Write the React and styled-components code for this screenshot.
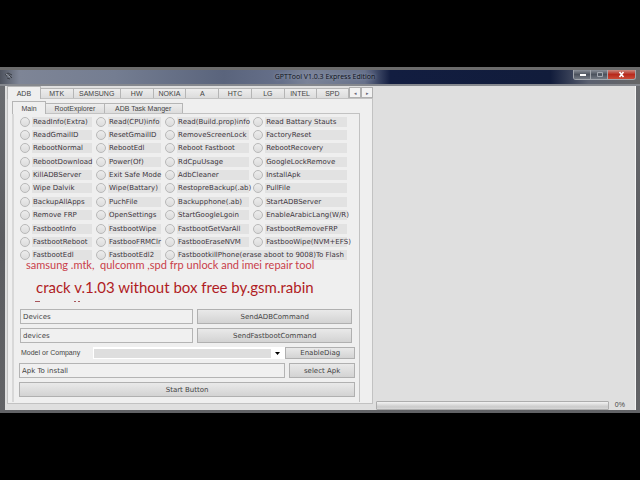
import React, { useState } from 'react';
import styled, { createGlobalStyle } from 'styled-components';

const GlobalStyle = createGlobalStyle`
    * {
        box-sizing: border-box;
    }

    body {
        margin: 0;
        background-color: #000;
        font-family: "DejaVu Sans", sans-serif;
        font-size: 7px;
        line-height: 10px;
        color: #444;
    }

    button, input, select {
        font: inherit;
        color: inherit;
        margin: 0;
        border-radius: 0;
    }
`

const Page = styled.div`
    min-height: 100vh;
    display: flex;
    align-items: center;
`

const Window = styled.div`
    flex: 1;
    min-width: 0;
    padding: 0 4px 3px 5px;
    background: linear-gradient(#6c6e72, #5b5c60 50%, #626366);
`

const TitleBar = styled.header`
    height: 19px;
    margin: 0 -4px 0 -5px;
    padding: 2px 4px 0 5px;
    display: grid;
    grid-template-columns: 72px 1fr 63px;
    align-items: start;
    border-top: 3px solid #6b6b6b;
    border-bottom: 2px solid #85888e;
    background: linear-gradient(90deg, #4e535e, #7e8596 3%, #747d91 18%, #5a647c 35%, #66708a 44%, #7b8498 48%, #67718a 57%, #121d40 61%, #111c3b 86%, #5a6070 92%, #666 100%);

    h1 {
        margin: 0;
        font-family: "Open Sans", sans-serif;
        font-size: 7px;
        font-weight: 400;
        line-height: 10px;
        text-align: center;
        color: #0c1018;
        text-shadow: 0 0 3px #8d97ad, 0 0 5px #8d97ad;
    }
`

const WindowButtons = styled.div`
    display: flex;
    margin-top: -2px;
    border: 1px solid #a2a6ad;
    border-top: none;
    border-radius: 0 0 3px 3px;
    overflow: hidden;
`

const WindowButton = styled.button`
    flex: ${({ $close }) => $close ? 28 : 17};
    height: 9px;
    padding: 0;
    display: flex;
    align-items: center;
    justify-content: center;
    border: none;
    border-right: 1px solid #a2a6ad;
    background: ${({ $close }) => $close ? 'linear-gradient(#c98a80, #b8291c 50%, #c84b38)' : 'linear-gradient(#8b9099, #4c525d 50%, #747a84)'};

    &:last-child {
        border-right: none;
    }

    svg {
        display: block;
    }
`

const Client = styled.main`
    display: grid;
    grid-template-columns: 368fr 263fr;
    height: 324px;
    padding-left: 2px;
    background-color: #dfdfdf;
    border-right: 1px solid #f4f4f4;
`

const LeftSide = styled.div`
    min-width: 0;
    display: flex;
    flex-direction: column;
    margin-bottom: 6px;
`

const Tabs = styled.nav`
    display: flex;
    align-items: flex-end;
    height: 12px;
    font-family: "Liberation Sans", sans-serif;
`

const Tab = styled.button`
    flex: ${({ $w }) => $w};
    min-width: 0;
    height: ${({ $active }) => $active ? 13 : 10}px;
    margin-bottom: ${({ $active }) => $active ? -1 : 0}px;
    position: relative;
    z-index: ${({ $active }) => $active ? 1 : 0};
    padding: 0;
    line-height: 9px;
    white-space: nowrap;
    border: 1px solid #b5b5b5;
    border-left-width: ${({ $active }) => $active ? 1 : 0}px;
    border-bottom: none;
    background: ${({ $active }) => $active ? '#efefef' : 'linear-gradient(#ededed, #dcdcdc)'};
`

const ArrowButton = styled.button`
    width: 12px;
    height: 11px;
    padding: 0;
    font-size: 5px;
    line-height: 6px;
    color: #667;
    border: 1px solid #b0b0b0;
    background-color: #f2f2f2;
`

const TabPanel = styled.section`
    flex: 1;
    display: flex;
    flex-direction: column;
    padding: 2px 12px 1px 4px;
    border: 1px solid #c2c2c2;
    background-color: #efefef;
`

const InnerTabs = styled(Tabs)`
    width: 49%;
`

const MainPanel = styled.div`
    flex: 1;
    padding: 1px 4px 0 5px;
    border: 1px solid #c2c2c2;
    border-bottom: none;
    border-left: 2px solid #d8d8d8;
`

const Options = styled.div`
    height: 147px;
    padding-left: 1px;
    display: grid;
    grid-template-columns: 76fr 69fr 88fr 102fr;
    grid-auto-rows: 1fr;
    align-items: center;
`

const Option = styled.label`
    min-width: 0;
    display: flex;
    align-items: center;
    gap: 2px;
    padding-right: ${({ $last }) => $last ? 8 : 4}px;
    grid-column: ${({ $wide }) => $wide ? 'span 2' : 'auto'};

    input {
        appearance: none;
        flex: none;
        width: 10px;
        height: 10px;
        border: 1px solid #b8b8b8;
        border-radius: 50%;
        background: linear-gradient(#ececec, #dcdcdc);
    }

    input:checked {
        background: radial-gradient(#555 30%, #e4e4e4 40%);
    }

    span {
        flex: 1;
        min-width: 0;
        height: 10px;
        padding-left: 1px;
        white-space: nowrap;
        color: #3c353c;
        background-color: #e2e2e2;
    }
`

const Notice = styled.div`
    height: 43px;
    margin-bottom: 7px;
    margin-top: -3px;
    overflow: hidden;
    font-family: Lato, sans-serif;
    white-space: nowrap;
    position: relative;

    p {
        margin: 0;
    }
`

const NoticeLine = styled.p`
    padding-left: ${({ $big }) => $big ? 17 : 7}px;
    font-size: ${({ $big }) => $big ? 15 : 11}px;
    line-height: ${({ $big }) => $big ? 34 : 11}px;
    color: ${({ $big }) => $big ? '#b01c24' : '#c9404a'};
`

// Tops of the next line, cut off by the end of the notice
const CutLine = styled.div`
    position: absolute;
    left: 16px;
    bottom: 0;
    width: 45px;
    height: 1px;
    background: linear-gradient(90deg, #a8545a 0 5px, transparent 5px 39px, #a8545a 39px 41px, transparent 41px 43px, #a8545a 43px);
`

const Controls = styled.div`
    display: flex;
    flex-direction: column;
    gap: 4px;
`

const ControlRow = styled.div`
    display: grid;
    grid-template-columns: ${({ $columns }) => $columns};
    gap: 4px;
    align-items: center;
    padding: ${({ $inset }) => $inset ? '0 3px 0 1px' : 0};
`

const TextBox = styled.input`
    width: 100%;
    min-width: 0;
    height: 15px;
    padding: 0 2px;
    border: 1px solid #b4b4b4;
    background-color: #f0f0f0;
`

const Button = styled.button`
    min-width: 0;
    height: ${({ $small }) => $small ? 12 : 15}px;
    padding: 0;
    line-height: 10px;
    white-space: nowrap;
    border: 1px solid #b0b0b0;
    background: linear-gradient(#e9e9e9, #d3d3d3);
`

const ModelRow = styled.div`
    display: grid;
    grid-template-columns: 74fr 192fr 70fr;
    align-items: center;

    label {
        padding-left: 2px;
        font-family: "Liberation Sans", sans-serif;
        white-space: nowrap;
    }
`

const SelectBox = styled.div`
    display: flex;
    align-items: center;
    height: 12px;
    padding-right: 4px;
    border: 1px solid #fff;
    background-color: #fff;

    select {
        appearance: none;
        flex: 1;
        min-width: 0;
        height: 9px;
        padding: 0;
        margin-right: 4px;
        border: none;
        background-color: #dedede;
    }
`

const RightSide = styled.div`
    display: flex;
    align-items: flex-end;
    gap: 6px;
    padding: 0 10px 0 3px;
    font-family: "Liberation Sans", sans-serif;
`

const Progress = styled.div`
    flex: 1;
    height: 9px;
    border: 1px solid #adadad;
    border-radius: 1px;
    background: linear-gradient(#f2f2f2, #cacaca 70%, #d8d8d8);
`

const ProgressFill = styled.div`
    height: 100%;
    background-color: #6cb86c;
`

const tabs = [
    ['ADB', 33], ['MTK', 33], ['SAMSUNG', 48], ['HW', 33], ['NOKIA', 33],
    ['A', 33], ['HTC', 33], ['LG', 33], ['INTEL', 32], ['SPD', 33],
];

const innerTabs = [['Main', 33], ['RootExplorer', 59], ['ADB Task Manger', 79]];

const options = [
    'ReadInfo(Extra)', 'Read(CPU)info', 'Read(Build.prop)info', 'Read Battary Stauts',
    'ReadGmailID', 'ResetGmailID', 'RemoveScreenLock', 'FactoryReset',
    'RebootNormal', 'RebootEdl', 'Reboot Fastboot', 'RebootRecovery',
    'RebootDownload', 'Power(Of)', 'RdCpuUsage', 'GoogleLockRemove',
    'KillADBServer', 'Exit Safe Mode', 'AdbCleaner', 'InstallApk',
    'Wipe Dalvik', 'Wipe(Battary)', 'RestopreBackup(.ab)', 'PullFile',
    'BackupAllApps', 'PuchFile', 'Backupphone(.ab)', 'StartADBServer',
    'Remove FRP', 'OpenSettings', 'StartGoogleLgoin', 'EnableArabicLang(W/R)',
    'FastbootInfo', 'FastbootWipe', 'FastbootGetVarAll', 'FastbootRemoveFRP',
    'FastbootReboot', 'FastbooFRMClr', 'FastbooEraseNVM', 'FastbooWipe(NVM+EFS)',
    'FastbootEdl', 'FastbootEdl2', 'FastbootkillPhone(erase aboot to 9008)To Flash',
];

export default function App() {

    const [tab, setTab] = useState('ADB');
    const [innerTab, setInnerTab] = useState('Main');
    const progress = 0;

    // Small Components

    const titleBar = (
        <TitleBar>
            <svg width="8" height="8" viewBox="0 0 8 8" fill="none" stroke="#3c4047">
                <path d="M0 3L3 1L7 3M1 4L4 3L7 6M2 6L5 7" />
                <path d="M1 2L5 5" stroke="#a0a5ad" />
            </svg>
            <h1>GPTTool V1.0.3 Express Edition</h1>
            <WindowButtons>
                <WindowButton aria-label="Minimize">
                    <svg width="7" height="7"><path d="M1 3h6v2h-6z" fill="#fff" /></svg>
                </WindowButton>
                <WindowButton aria-label="Maximize">
                    <svg width="7" height="7"><path d="M1.5 1.5h5v4h-5z" fill="none" stroke="#a4a8b0" /></svg>
                </WindowButton>
                <WindowButton $close aria-label="Close">
                    <svg width="7" height="7"><path d="M1.5 1L5.5 6M5.5 1L1.5 6" fill="none" stroke="#fff" strokeWidth="1.6" /></svg>
                </WindowButton>
            </WindowButtons>
        </TitleBar>
    )

    const optionsGrid = (
        <Options>
            {options.map((name, index) => {
                const wide = index === options.length - 1;
                return (
                    <Option key={name} $wide={wide} $last={wide || index % 4 === 3}>
                        <input type="radio" name="action" value={name} />
                        <span>{name}</span>
                    </Option>)
            })}
        </Options>
    )

    const controls = (
        <Controls>
            <ControlRow $columns="173fr 155fr" $inset>
                <TextBox aria-label="ADB command" defaultValue="Devices" />
                <Button>SendADBCommand</Button>
            </ControlRow>
            <ControlRow $columns="173fr 155fr" $inset>
                <TextBox aria-label="Fastboot command" defaultValue="devices" />
                <Button>SendFastbootCommand</Button>
            </ControlRow>
            <ModelRow>
                <label htmlFor="model">Model or Company</label>
                <SelectBox>
                    <select id="model" defaultValue="">
                        <option value=""></option>
                    </select>
                    <svg width="5" height="3"><path d="M0 0h5L2.500 3z" fill="#000" /></svg>
                </SelectBox>
                <Button $small>EnableDiag</Button>
            </ModelRow>
            <ControlRow $columns="265fr 66fr">
                <TextBox aria-label="Apk" defaultValue="Apk To install" />
                <Button>select Apk</Button>
            </ControlRow>
            <Button>Start Button</Button>
        </Controls>
    )

    return (
        <Page>
            <GlobalStyle />
            <Window>
                {titleBar}
                <Client>
                    <LeftSide>
                        <Tabs>
                            {tabs.map(([name, w]) => (
                                <Tab key={name} $w={w} $active={tab === name} onClick={() => setTab(name)}>{name}</Tab>
                            ))}
                            <ArrowButton aria-label="Previous tabs">◂</ArrowButton>
                            <ArrowButton aria-label="Next tabs">▸</ArrowButton>
                        </Tabs>
                        <TabPanel>
                            <InnerTabs>
                                {innerTabs.map(([name, w]) => (
                                    <Tab key={name} $w={w} $active={innerTab === name} onClick={() => setInnerTab(name)}>{name}</Tab>
                                ))}
                            </InnerTabs>
                            <MainPanel>
                                {optionsGrid}
                                <Notice>
                                    <NoticeLine>samsung .mtk,&nbsp; qulcomm ,spd frp unlock and imei repair tool</NoticeLine>
                                    <NoticeLine $big>crack v.1.03 without box free by.gsm.rabin</NoticeLine>
                                    <CutLine />
                                </Notice>
                                {controls}
                            </MainPanel>
                        </TabPanel>
                    </LeftSide>
                    <RightSide>
                        <Progress role="progressbar" aria-label="Progress" aria-valuenow={progress}>
                            <ProgressFill style={{ width: `${progress}%` }} />
                        </Progress>
                        <span>{progress}%</span>
                    </RightSide>
                </Client>
            </Window>
        </Page>
    )
}
